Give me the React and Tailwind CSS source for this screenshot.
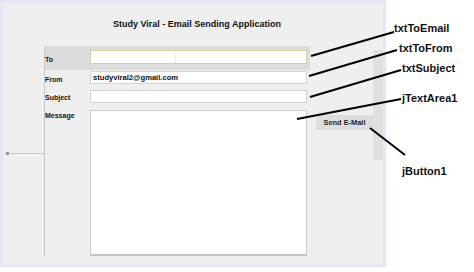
import React from 'react';

const font = { fontFamily: '"Liberation Sans", Arial, sans-serif' };

function Field({ className = '', children }) {
  return (
    <div className={`w-[217px] border border-[#d2d2d2] bg-white flex items-center pl-[2px] ${className}`}>
      {children}
    </div>
  );
}

// callouts that point from the annotation names to the form controls
const callouts = [
  { text: 'txtToEmail', left: 394, top: 22, line: [311, 56, 394, 32] },
  { text: 'txtToFrom', left: 399, top: 42, line: [309, 76, 397, 50] },
  { text: 'txtSubject', left: 402, top: 62, line: [310, 97, 401, 70] },
  { text: 'jTextArea1', left: 402, top: 92, line: [297, 119, 401, 99] },
  { text: 'jButton1', left: 402, top: 165, line: [370, 128, 405, 155] },
];

export default function App() {
  return (
    <div className="relative w-[474px] h-[272px] bg-white overflow-hidden" style={font}>
      {/* Form window */}
      <div className="w-[386px] h-[267px] border-[3px] border-[#e6e6f6] bg-[#efefef] flex flex-col">
        <div className="h-[43px] flex items-center justify-center pl-[8px]">
          <span className="text-[9px] font-bold text-[#111] leading-none">
            Study Viral - Email Sending Application
          </span>
        </div>

        <div className="flex flex-1">
          {/* left margin with guide line */}
          <div className="w-[41px] pt-[107px] pl-[2px]">
            <div className="relative h-px bg-[#c4c4c4]">
              <div className="absolute left-[1px] -top-[1px] w-[3px] h-[3px] bg-[#999]" />
            </div>
          </div>

          {/* labels + inputs */}
          <div className="w-[266px] h-[210px] border-l border-[#c8c8c8] flex flex-col text-[7px] font-bold text-[#111]">
            <div className="h-[24px] bg-[#dcdcdc] flex">
              <div className="w-[45px] pt-[9px]">To</div>
              <div className="w-[217px] h-[14px] mt-[4px] border border-[#d9cf9f] bg-white relative">
                <div className="absolute left-[84px] top-0 bottom-0 w-px bg-[#ececec]" />
              </div>
            </div>
            <div className="h-[20px] flex">
              <div className="w-[45px] pt-[5px]">From</div>
              <Field className="h-[13px] mt-[1px] text-[7.6px]">studyviral2@gmail.com</Field>
            </div>
            <div className="h-[20px] flex">
              <div className="w-[45px] pt-[3px]">Subject</div>
              <Field className="h-[13px]" />
            </div>
            <div className="flex-1 flex">
              <div className="w-[45px] pt-[1px]">Message</div>
              <div className="w-[217px] h-[146px] border border-[#cfcfcf] border-b-2 border-b-[#c4c4c4] bg-white" />
            </div>
          </div>

          {/* button + side bar */}
          <div className="flex-1 flex">
            <div className="w-[63px] pt-[69px] pl-[6px]">
              <button className="block w-[57px] h-[15px] bg-[#dedede] text-[7.4px] font-bold text-[#222] leading-none">
                Send E-Mail
              </button>
            </div>
            <div className="flex-1 h-[110px] mt-[4px] bg-[#e0e0e0]" />
          </div>
        </div>
      </div>

      {/* callout lines */}
      <svg className="absolute inset-0 pointer-events-none" width="474" height="272">
        {callouts.map(({ text, line }) => (
          <line key={text} x1={line[0]} y1={line[1]} x2={line[2]} y2={line[3]} stroke="#000" strokeWidth="2" />
        ))}
      </svg>
      {callouts.map(({ text, left, top }) => (
        <span
          key={text}
          className="absolute text-[11px] leading-[13px] font-bold text-[#111]"
          style={{ left, top }}
        >
          {text}
        </span>
      ))}
    </div>
  );
}
